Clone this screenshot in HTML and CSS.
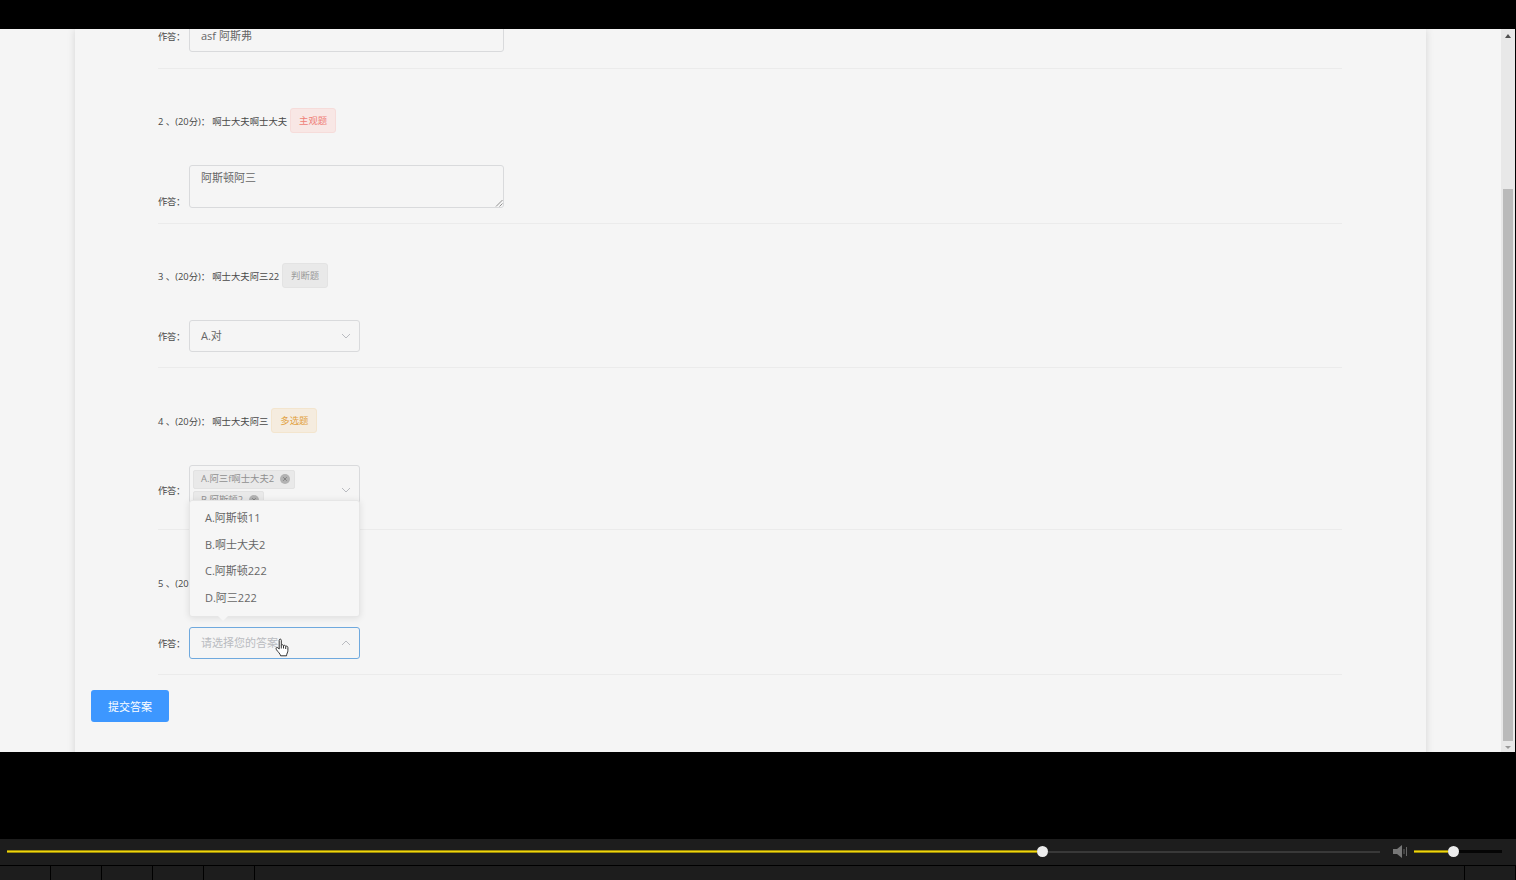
FILE: index.html
```
<!DOCTYPE html>
<html lang="zh-CN">
<head>
  <meta charset="UTF-8">
  <meta name="viewport" content="width=device-width, initial-scale=1.0">
  <title>在线答题</title>
  <link rel="stylesheet" href="styles.css">
</head>
<body>
  <div class="player">
    <!-- Video area -->
    <div class="screen">
      <div class="page">
        <div class="card">
          <div class="question first">
            <div class="answer">
              <label>作答：</label>
              <div class="input">asf 阿斯弗</div>
            </div>
          </div>

          <div class="question">
            <div class="title"><span class="text">2 、(20分)：<b>啊士大夫啊士大夫</b></span><span class="tag danger">主观题</span></div>
            <div class="answer answer-area">
              <label>作答：</label>
              <div class="input textarea">阿斯顿阿三
                <svg class="grip" viewBox="0 0 8 8"><path d="M1 7.5L7.500 1M4.500 7.500L7.500 4.500"/></svg>
              </div>
            </div>
          </div>

          <div class="question">
            <div class="title"><span class="text">3 、(20分)：<b>啊士大夫阿三22</b></span><span class="tag info">判断题</span></div>
            <div class="answer">
              <label>作答：</label>
              <div class="input select">A.对
                <svg class="arrow" viewBox="0 0 10 6"><path d="M1 1l4 4 4-4"/></svg>
              </div>
            </div>
          </div>

          <div class="question spaced">
            <div class="title"><span class="text">4 、(20分)：<b>啊士大夫阿三</b></span><span class="tag warning">多选题</span></div>
            <div class="answer">
              <label>作答：</label>
              <div class="input select multiple">
                <div class="chips">
                  <span class="chip">A.阿三f啊士大夫2<svg class="close" viewBox="0 0 10 10"><circle cx="5" cy="5" r="5"/><path d="M3.200 3.200l3.600 3.600M6.800 3.200L3.200 6.800"/></svg></span>
                  <span class="chip">B.阿斯顿2<svg class="close" viewBox="0 0 10 10"><circle cx="5" cy="5" r="5"/><path d="M3.200 3.200l3.600 3.600M6.800 3.200L3.200 6.800"/></svg></span>
                </div>
                <svg class="arrow" viewBox="0 0 10 6"><path d="M1 1l4 4 4-4"/></svg>
              </div>
            </div>
          </div>

          <div class="question spaced">
            <div class="title"><span class="text">5 、(20分)：</span></div>
            <div class="answer">
              <label>作答：</label>
              <div class="input select active">
                <span class="placeholder">请选择您的答案</span>
                <svg class="arrow" viewBox="0 0 10 6"><path d="M1 5l4-4 4 4"/></svg>
                <ul class="dropdown">
                  <li>A.阿斯顿11</li>
                  <li>B.啊士大夫2</li>
                  <li>C.阿斯顿222</li>
                  <li>D.阿三222</li>
                </ul>
                <svg class="cursor" viewBox="0 0 14 19"><path d="M4.200 11V2.300C4.200.7 6.300.7 6.300 2.300V7.500C6.700 6.300 8.400 6.500 8.500 7.800 9 6.900 10.500 7.200 10.700 8.400 11.400 7.700 12.900 8.200 12.900 9.600V12.500C12.900 14.500 11.700 15.300 11.500 17.800H5.600C5.200 15.600 3 14 1.500 11.800.3 10 1.900 8.800 3 9.900ZM6.300 7.500V10.500M8.500 8V10.500M10.700 8.500V11"/></svg>
              </div>
            </div>
          </div>

          <button class="submit">提交答案</button>
        </div>
      </div>

      <div class="scrollbar">
        <span class="up"></span>
        <span class="thumb"></span>
        <span class="down"></span>
      </div>
    </div>

    <!-- Player controls -->
    <div class="controls">
      <div class="track progress">
        <div class="played"></div>
        <div class="knob"></div>
        <div class="rest"></div>
      </div>
      <svg class="speaker" viewBox="0 0 15 13"><path class="cone" d="M0 4h4l5-4v13l-5-4H0z"/><path class="wave" d="M11 4v5M13.500 2v9"/></svg>
      <div class="track volume">
        <div class="played"></div>
        <div class="knob"></div>
        <div class="rest"></div>
      </div>
    </div>
    <div class="buttons">
      <span></span><span></span><span></span><span></span><span></span>
      <span class="fill"></span>
      <span class="last"></span>
    </div>
  </div>
</body>
</html>
```
FILE: styles.css
```
* {
  box-sizing: border-box;
}

body {
  margin: 0;
  background: #000;
  font-family: "Open Sans", "Noto Sans CJK SC", sans-serif;
  font-size: 9.4px;
  color: #484848;
  overflow: hidden;
}

.player {
  display: flex;
  flex-direction: column;
  height: 880px;
  padding-top: 29px;
}

.screen {
  display: flex;
  height: 723px;
  padding-right: 1px;
  margin-bottom: 87px;
}

.page {
  flex: 1;
  padding: 0 75px;
  background: #f5f5f5;
  overflow: hidden;
}

.card {
  height: 740px;
  padding: 0 84px 0 83px;
  box-shadow: 0 0 8px rgba(0, 0, 0, 0.13);
}

/* Questions */
.question {
  padding: 39px 0 15px;
  border-bottom: 1px solid #ebebeb;
}

.question.spaced {
  padding-top: 40px;
}

.question.first {
  display: flex;
  align-items: flex-start;
  height: 40px;
  padding: 0;
}

.first .answer {
  margin-top: -9px;
}

.title {
  display: flex;
  align-items: center;
  height: 25px;
  margin-bottom: 32px;
  white-space: nowrap;
}

.title .text {
  display: flex;
}

.title b {
  margin-left: 2px;
  font-weight: normal;
}

.tag {
  width: 46px;
  height: 25px;
  margin-left: 3px;
  line-height: 23px;
  text-align: center;
  border: 1px solid;
  border-radius: 3px;
}

.danger {
  color: #ef8078;
  background: #f8e7e5;
  border-color: #f6dcda;
}

.info {
  color: #9b9b9b;
  background: #e9e9e9;
  border-color: #e3e3e3;
}

.warning {
  color: #e2a23f;
  background: #f5ecdf;
  border-color: #f3e5ce;
}

.answer {
  display: flex;
  align-items: center;
}

.answer label {
  width: 31px;
  letter-spacing: -0.4px;
  white-space: nowrap;
}

.answer-area {
  align-items: flex-end;
}

.input {
  position: relative;
  width: 315px;
  height: 32px;
  padding: 0 11px;
  line-height: 30px;
  font-size: 11px;
  color: #666;
  border: 1px solid #d9dadc;
  border-radius: 3px;
}

.textarea {
  height: 43px;
  line-height: 24px;
}

.grip {
  position: absolute;
  right: 0;
  bottom: 0;
  width: 8px;
  height: 8px;
  fill: none;
  stroke: #777;
  stroke-width: 0.8;
}

.select {
  display: flex;
  align-items: center;
  justify-content: space-between;
  width: 171px;
  padding-right: 8px;
}

.arrow {
  width: 10px;
  height: 6px;
  fill: none;
  stroke: #b9bbc0;
}

.multiple {
  height: 49px;
  padding-left: 3px;
}

.chips {
  display: flex;
  flex-direction: column;
  align-items: flex-start;
  gap: 2px;
}

.chip {
  display: flex;
  align-items: center;
  gap: 6px;
  height: 19px;
  padding: 0 4px 0 7px;
  font-size: 9.4px;
  color: #909090;
  background: #e9e9e9;
  border: 1px solid #e2e2e2;
  border-radius: 2px;
}

.close {
  width: 10px;
  height: 10px;
  fill: #b2b2b2;
  stroke: #777;
  stroke-width: 0.8;
}

.close circle {
  stroke: none;
}

.active {
  border-color: #6fa9de;
}

.placeholder {
  color: #b9bbc0;
}

.dropdown {
  position: absolute;
  left: -1px;
  bottom: 41px;
  width: 171px;
  height: 117px;
  margin: 0;
  padding: 4px 0;
  list-style: none;
  background: #f6f6f6;
  border: 1px solid #e6e6e6;
  border-radius: 3px;
  box-shadow: 0 1px 7px rgba(0, 0, 0, 0.1);
}

/* small pointer under the menu */
.dropdown::after {
  content: "";
  position: absolute;
  left: 28px;
  bottom: -5px;
  border: 5px solid transparent;
  border-top-color: #f6f6f6;
  border-bottom: 0;
}

.dropdown li {
  height: 26.6px;
  padding-left: 15px;
  line-height: 26.6px;
}

.cursor {
  position: absolute;
  left: 85px;
  top: 10px;
  width: 14px;
  height: 19px;
  fill: #fff;
  stroke: #333;
}

.submit {
  display: block;
  width: 78px;
  height: 32px;
  margin: 15px 0 0 -67px;
  padding: 0;
  font-family: inherit;
  font-size: 11px;
  color: #fff;
  background: #3d97ff;
  border: 0;
  border-radius: 3px;
}

.scrollbar {
  display: flex;
  flex-direction: column;
  align-items: center;
  width: 14px;
  padding: 5px 0 3px;
  background: #e8e8e8;
}

.up {
  border: 3px solid transparent;
  border-top: 0;
  border-bottom: 4px solid #505050;
}

.thumb {
  width: 10px;
  height: 552px;
  margin: auto 0 5px;
  background: #bababa;
}

.down {
  border: 3px solid transparent;
  border-bottom: 0;
  border-top: 3px solid #999;
}

/* Controls */
.controls {
  display: flex;
  align-items: center;
  height: 26px;
  padding: 0 14px 1px 7px;
  background: #1d1d1d;
}

.track {
  display: flex;
  align-items: center;
}

.progress {
  width: 1373px;
}

.played {
  height: 3px;
  background: #f0d60c;
  border: solid #9a8908;
  border-width: 1px 0;
}

.progress .played {
  width: 1030px;
}

.knob {
  width: 11px;
  height: 11px;
  border-radius: 50%;
  background: #ececec;
}

.rest {
  flex: 1;
  height: 2px;
  background: #393939;
}

.speaker {
  width: 15px;
  height: 13px;
  margin: 0 6px 0 13px;
}

.cone {
  fill: #777;
}

.wave {
  fill: none;
  stroke: #666;
}

.volume {
  width: 88px;
}

.volume .played {
  width: 34px;
}

.volume .rest {
  height: 3px;
  background: #050505;
}

.buttons {
  display: flex;
  height: 14px;
  margin-top: 1px;
}

.buttons span {
  width: 51px;
  background: #1d1d1d;
  border-right: 1px solid #000;
}

.buttons .fill {
  flex: 1;
}
```
